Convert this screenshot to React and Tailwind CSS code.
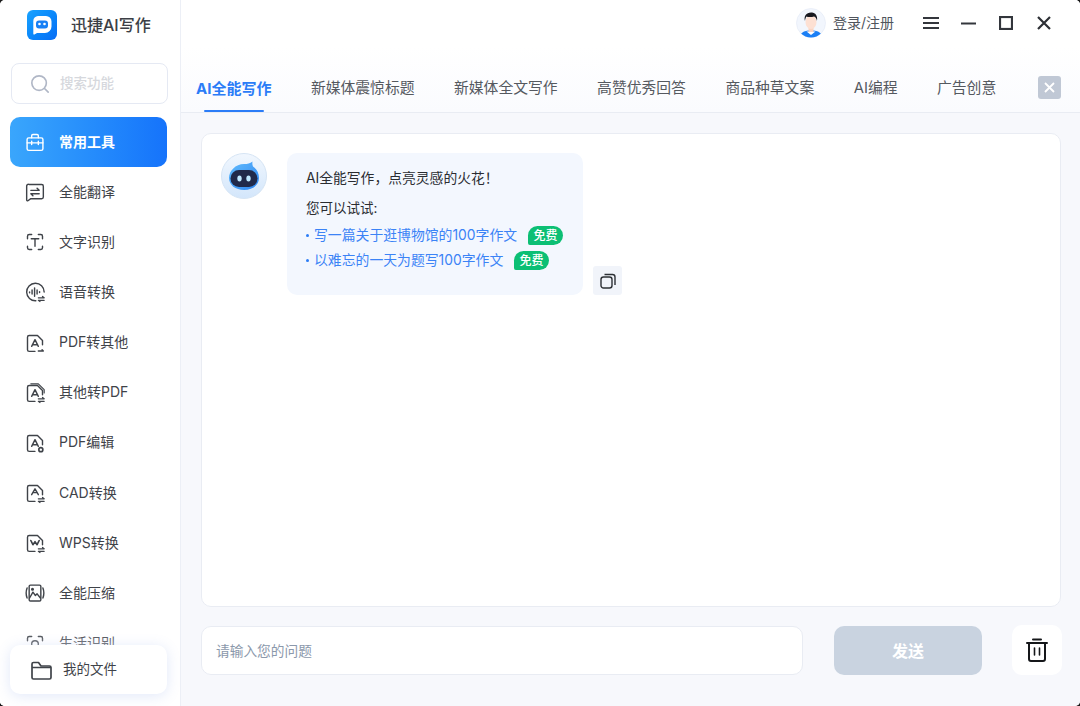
const FONT = "font-['Inter','Noto_Sans_CJK_SC',sans-serif]";

const S = ({ children, size = 26, className = "" }) => (
  <svg width={size} height={size} viewBox="0 0 24 24" fill="none" stroke="currentColor" strokeWidth="1.700" strokeLinecap="round" strokeLinejoin="round" className={className}>{children}</svg>
);

const Swap = () => (
  <g strokeWidth="1.500"><path d="M16 19h7l-2-1.600" /><path d="M23 22h-7l2 1.400" /></g>
);
const Doc = ({ children }) => (
  <>
    <path d="M12 22H5a2 2 0 0 1-2-2V5a2 2 0 0 1 2-2h10l6 6v5" />
    {children}
  </>
);
const Tri = () => <path d="M8 16l4-8 4 8M9.500 14h5" />;

const icons = {
  tool: (
    <S><rect x="2.500" y="7" width="19" height="15" rx="2" /><path d="M8 7V4.500A1.500 1.500 0 0 1 9.500 3h5A1.500 1.500 0 0 1 16 4.500V7" /><path d="M2.500 13h19M8 11v4M16 11v4" /></S>
  ),
  translate: (
    <S><path d="M5 3h15a2 2 0 0 1 2 2v13a2 2 0 0 1-2 2H7l-3.500 2.500A1 1 0 0 1 2 21.500V5a2 2 0 0 1 3-2z" /><path d="M7 10h10l-2.500-2.500M17 14H7l2.500 2.500" /></S>
  ),
  text: (
    <S><path d="M3 8V5a2 2 0 0 1 2-2h3M16 3h3a2 2 0 0 1 2 2v3M21 17v2a2 2 0 0 1-2 2h-3M8 21H5a2 2 0 0 1-2-2v-2" /><path d="M7.500 8h9M12 8v9" /></S>
  ),
  voice: (
    <S><path d="M13 22.500A10.500 10.500 0 1 1 23 12" /><path d="M5.500 12v1M8.500 9.500v5M11.500 7v10M14.500 9.500v5M17.500 11.500v1" /><Swap /></S>
  ),
  pdfOut: (
    <S><Doc><Tri /><path d="M16 21.500h6l-1.500-1.500" /></Doc></S>
  ),
  toPdf: (
    <S><Doc><Tri /><Swap /></Doc><path d="M7 1h9l7 7v4" strokeWidth="1.400" /></S>
  ),
  pdfEdit: (
    <S><Doc><Tri /></Doc><circle cx="19" cy="20" r="2.400" strokeWidth="2" /></S>
  ),
  cad: (
    <S><Doc><path d="M8 14l4-7 4 7M9.500 11.500h5" /><Swap /></Doc></S>
  ),
  wps: (
    <S><Doc><path d="M7 9l2.500 5 2.500-3.500L14.500 14 17 9" strokeWidth="2" /><Swap /></Doc></S>
  ),
  compress: (
    <S><rect x="5" y="2.500" width="14" height="19" rx="1.500" /><path d="M5.500 18l4-7 3 4 2-2 4 5" /><circle cx="9" cy="7.500" r="1" /><path d="M2.500 6c-1.500 4-1.500 8 0 12M21.500 6c1.500 4 1.500 8 0 12" /></S>
  ),
  life: (
    <S><path d="M3 8V5a2 2 0 0 1 2-2h3M16 3h3a2 2 0 0 1 2 2v3M21 17v2a2 2 0 0 1-2 2h-3M8 21H5a2 2 0 0 1-2-2v-2" /><circle cx="12" cy="12" r="4" /></S>
  ),
};

const nav = [
  ["全能翻译", "translate"],
  ["文字识别", "text"],
  ["语音转换", "voice"],
  ["PDF转其他", "pdfOut"],
  ["其他转PDF", "toPdf"],
  ["PDF编辑", "pdfEdit"],
  ["CAD转换", "cad"],
  ["WPS转换", "wps"],
  ["全能压缩", "compress"],
  ["生活识别", "life"],
];

const tabs = ["新媒体震惊标题", "新媒体全文写作", "高赞优秀回答", "商品种草文案", "AI编程", "广告创意"];

const Logo = () => (
  <div className="w-[30px] h-[30px] rounded-[6px] bg-gradient-to-br from-[#1aa3ff] to-[#0a6cf5] flex items-center justify-center">
    <svg width="22" height="22" viewBox="0 0 22 22">
      <path d="M7 2h8a5.500 5.500 0 0 1 5.500 5.500v5A6.500 6.500 0 0 1 14 19H6l-2.500 1.500a.8.8 0 0 1-1.200-.7V7A5 5 0 0 1 7 2z" fill="#fff" />
      <rect x="5" y="6.500" width="12" height="8" rx="3" fill="#1780f5" />
      <circle cx="8.500" cy="10" r="1.300" fill="#fff" />
      <circle cx="13.500" cy="10" r="1.300" fill="#fff" />
    </svg>
  </div>
);

const UserAvatar = () => (
  <svg width="30" height="30" viewBox="0 0 30 30">
    <defs><clipPath id="ua"><circle cx="15" cy="15" r="14.500" /></clipPath></defs>
    <circle cx="15" cy="15" r="14.500" fill="#f2f6fd" stroke="#e3e9f5" strokeWidth=".6" />
    <g clipPath="url(#ua)">
      <path d="M4 30c0-5 3-7.500 11-7.500S26 25 26 30z" fill="#1b7ff5" />
      <path d="M10.500 23.500h9L15 27z" fill="#fff" />
      <rect x="12.500" y="18" width="5" height="6" fill="#f8d4c4" />
      <ellipse cx="15" cy="14" rx="5.500" ry="7" fill="#fde0d3" />
      <path d="M9 13c-1.500-5 1.500-9 7-8.500 3 .2 6 3 5 8.500-.5-2.500-1.500-4-3-4.500-3 1-6.500 .5-7.500 0-.8 1-1.300 2.500-1.500 4.500z" fill="#17181f" />
    </g>
  </svg>
);

const RobotAvatar = () => (
  <svg width="46" height="46" viewBox="0 0 46 46">
    <defs>
      <linearGradient id="rb" x1="0" y1="0" x2="0" y2="1"><stop offset="0" stopColor="#f1f7fe" /><stop offset="1" stopColor="#d3e6fb" /></linearGradient>
      <linearGradient id="rh" x1="0" y1="0" x2="1" y2="1"><stop offset="0" stopColor="#62bdfd" /><stop offset="1" stopColor="#2f86f2" /></linearGradient>
    </defs>
    <circle cx="23" cy="23" r="22.500" fill="url(#rb)" stroke="#d5e4f4" />
    <path d="M23 11c3.500 0 6-.5 8.500-2.500-.3 2-.2 3.500.5 5C35.500 16 38 20 38 25c0 7-6.500 12-15 12S8 32 8 25s6.500-14 15-14z" fill="url(#rh)" />
    <rect x="9.500" y="17" width="27" height="17" rx="8.500" fill="#20294a" />
    <ellipse cx="18.500" cy="25.500" rx="2.200" ry="3" fill="#bfe8ff" />
    <ellipse cx="27.500" cy="25.500" rx="2.200" ry="3" fill="#bfe8ff" />
  </svg>
);

const Free = () => (
  <span className="inline-flex items-center justify-center w-[35px] h-[19px] rounded-[10px] rounded-bl-[2px] bg-[#0cbf74] text-white text-[12px] font-medium leading-none">免费</span>
);

const Suggest = ({ text }) => (
  <div className="flex items-center h-[25px]">
    <span className="w-[3px] h-[3px] rounded-full bg-[#2b7cf6] mr-[5px] shrink-0" />
    <span className="text-[#3b83f6] text-[13.850px] w-[205px] whitespace-nowrap [&.short]:w-[191px]">{text}</span>
    <span className="ml-[9px] flex"><Free /></span>
  </div>
);

export default function App() {
  return (
    <div className={`${FONT} w-[1080px] h-[706px] bg-[#1a1a1a]`}>
      <div className="w-full h-full flex overflow-hidden rounded-[5px] bg-white">
        <aside className="relative w-[181px] shrink-0 h-full flex flex-col bg-white border-r border-[#eceff6] overflow-hidden">
          <div className="h-[63px] shrink-0 flex items-start pl-[27px] pt-[10px] gap-[14px]">
            <Logo />
            <span className="text-[16px] leading-[30px] font-medium text-[#3c3f46] whitespace-nowrap">迅捷AI写作</span>
          </div>
          <div className="mx-[11px] h-[41px] w-[157px] shrink-0 rounded-[8px] border border-[#e5e9f3] flex items-center pl-[18px] gap-[10px]">
            <svg width="20" height="20" viewBox="0 0 22 22" fill="none" stroke="#b0b7c6" strokeWidth="1.800" strokeLinecap="round"><circle cx="10" cy="10" r="8" /><path d="M16 16l4 4" /></svg>
            <span className="text-[13.500px] font-medium text-[#d6d8dd]">搜索功能</span>
          </div>
          <nav className="mt-[13px] pl-[10px] flex flex-col">
            <div className="w-[157px] h-[50px] rounded-[10px] bg-gradient-to-r from-[#3aa6fc] to-[#1673fb] flex items-center pl-[15px] gap-[14px] text-white">
              <span className="w-[20px] h-[20px] flex items-center justify-center">{icons.tool}</span>
              <span className="text-[14px] font-bold pb-[2px]">常用工具</span>
            </div>
            <div className="flex flex-col -mt-[1px]">
              {nav.map(([label, icon]) => (
                <div key={label} className="w-[157px] h-[50.180px] shrink-0 flex items-center pl-[15px] gap-[14px] text-[#3f4349]">
                  <span className="w-[20px] h-[20px] mt-[2px] flex items-center justify-center">{icons[icon]}</span>
                  <span className="text-[14px] whitespace-nowrap">{label}</span>
                </div>
              ))}
            </div>
          </nav>
          <div className="absolute left-0 right-0 bottom-0 h-[75px] bg-gradient-to-b from-white/0 via-white/90 to-white" />
          <div className="absolute left-[10px] top-[645px] w-[157px] h-[49px] rounded-[10px] bg-white shadow-[0_2px_14px_rgba(90,130,220,0.18)] flex items-center pl-[20px] gap-[11px] text-[#3f4349]">
            <svg width="22" height="22" viewBox="0 0 22 22" fill="none" stroke="currentColor" strokeWidth="1.700" strokeLinejoin="round"><path d="M2 18.500V5a1.500 1.500 0 0 1 1.500-1.500h5L11 7h8.500A1.500 1.500 0 0 1 21 8.500v10A1.500 1.500 0 0 1 19.500 20h-16A1.500 1.500 0 0 1 2 18.500z" /><path d="M2 8.500h19" /></svg>
            <span className="text-[13.500px]">我的文件</span>
          </div>
        </aside>

        <main className="flex-1 min-w-0 flex flex-col h-full bg-[#f7f8fc]">
          <header className="h-[46px] shrink-0 bg-white flex items-center pl-[615px]">
            <UserAvatar />
            <span className="ml-[7px] text-[14px] text-[#50555d] whitespace-nowrap pb-[2px]">登录/注册</span>
            <svg className="ml-[29px]" width="16" height="14" viewBox="0 0 16 14" stroke="#33363c" strokeWidth="2.200"><path d="M0 2h16M0 7h16M0 12h16" /></svg>
            <svg className="ml-[22px]" width="16" height="14" viewBox="0 0 16 14" stroke="#33363c" strokeWidth="2"><path d="M0 7.500h15" /></svg>
            <svg className="ml-[22px]" width="14" height="14" viewBox="0 0 14 14" fill="none" stroke="#33363c" strokeWidth="2.200"><rect x="1" y="1" width="12" height="12" /></svg>
            <svg className="ml-[24px]" width="14" height="14" viewBox="0 0 14 14" stroke="#2d3035" strokeWidth="2.200"><path d="M1 1l12 12M13 1L1 13" /></svg>
          </header>
          <div className="h-[67px] shrink-0 bg-gradient-to-b from-white to-[#fafbfe] border-b border-[#e9ecf3] flex items-end pl-[15px] pr-[19px]">
            <div className="flex items-start gap-[39.500px] h-[47px] flex-1 min-w-0">
              <div className="h-[47px] relative pt-[12px] leading-[23px] text-[15px] font-bold text-[#2b7cf7] whitespace-nowrap">
                AI全能写作
                <span className="absolute left-[8px] right-[7px] bottom-[0px] h-[2px] rounded bg-[#2b7cf7]" />
              </div>
              {tabs.map((t) => (
                <div key={t} className="pt-[12px] leading-[23px] text-[14.800px] text-[#55595f] whitespace-nowrap">{t}</div>
              ))}
            </div>
            <div className="self-start mt-[30px] w-[23px] h-[23px] shrink-0 rounded-[3px] bg-[#c0c8d5] flex items-center justify-center">
              <svg width="11" height="11" viewBox="0 0 11 11" stroke="#fff" strokeWidth="1.800"><path d="M1 1l9 9M10 1l-9 9" /></svg>
            </div>
          </div>

          <div className="flex-1 min-h-0 flex flex-col pl-[20px] pr-[19px] pt-[20px] pb-[31px]">
            <section className="flex-1 min-h-0 bg-white rounded-[10px] border border-[#e9ecf3] pl-[19px] pt-[19px] flex items-start">
              <RobotAvatar />
              <div className="ml-[20px] w-[296px] h-[142px] rounded-[10px] bg-[#f3f7fe] pl-[19px] pt-[15px] text-[#2a2c31]">
                <div className="text-[13.800px] leading-[21px]">AI全能写作，点亮灵感的火花！</div>
                <div className="text-[13.500px] leading-[21px] mt-[9px]">您可以试试:</div>
                <div className="mt-[4px] flex flex-col">
                  <div className="flex items-center h-[25px]">
                    <span className="w-[3px] h-[3px] rounded-full bg-[#2b7cf6] mr-[5px] shrink-0" />
                    <span className="text-[#3b83f6] text-[13.850px] w-[205px] whitespace-nowrap">写一篇关于逛博物馆的100字作文</span>
                    <span className="ml-[9px] flex"><Free /></span>
                  </div>
                  <div className="flex items-center h-[25px]">
                    <span className="w-[3px] h-[3px] rounded-full bg-[#2b7cf6] mr-[5px] shrink-0" />
                    <span className="text-[#3b83f6] text-[13.850px] w-[191px] whitespace-nowrap">以难忘的一天为题写100字作文</span>
                    <span className="ml-[9px] flex"><Free /></span>
                  </div>
                </div>
              </div>
              <div className="self-start mt-[113px] ml-[10px] w-[29px] h-[29px] rounded-[3px] bg-[#f1f4fa] flex items-center justify-center">
                <svg width="16" height="16" viewBox="0 0 16 16" fill="none" stroke="#2d3035" strokeWidth="1.400" strokeLinejoin="round"><rect x="1" y="4" width="11" height="11" rx="2.500" /><path d="M4.500 1.500h8A2.500 2.500 0 0 1 15 4v8" /></svg>
              </div>
            </section>
            <div className="mt-[19px] h-[49px] shrink-0 flex items-stretch">
              <div className="w-[602px] shrink-0 rounded-[10px] bg-white border border-[#e9ecf3] flex items-center pl-[14px] pt-[1px] text-[13.700px] text-[#8b98ab]">请输入您的问题</div>
              <div className="ml-[31px] w-[148px] shrink-0 rounded-[10px] bg-[#c9d3e0] flex items-center justify-center text-white text-[16px] font-bold">发送</div>
              <div className="ml-[30px] w-[50px] shrink-0 -mt-[1px] rounded-[10px] bg-white flex items-center justify-center">
                <svg width="22" height="24" viewBox="0 0 22 24" fill="none" stroke="#15171a" strokeWidth="2" strokeLinecap="round"><path d="M1 5h20M7 1.500h8" /><path d="M3 5v16a2 2 0 0 0 2 2h12a2 2 0 0 0 2-2V5" /><path d="M8.500 10v7M13.500 10v7" strokeWidth="1.600" /></svg>
              </div>
            </div>
          </div>
        </main>
      </div>
    </div>
  );
}
